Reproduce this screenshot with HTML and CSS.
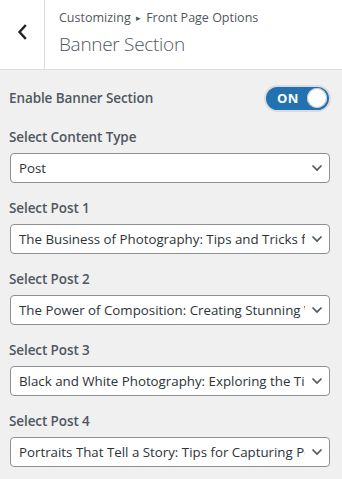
FILE: index.html
```html
<!DOCTYPE html>
<html>
<head>
<meta charset="utf-8">
<link rel="stylesheet" href="styles.css">
</head>
<body>
<div class="panel">
  <header class="head">
    <div class="back">
      <svg width="10" height="16" viewBox="0 0 10 16"><path d="M8 2 L2.5 8 L8 14" fill="none" stroke="#1d2327" stroke-width="2.4" stroke-linecap="square"/></svg>
    </div>
    <div class="titles">
      <div class="crumb">Customizing <span class="arrow">▸</span> Front Page Options</div>
      <div class="title">Banner Section</div>
    </div>
  </header>
  <main class="body">
    <div class="toggle-row">
      <span class="label">Enable Banner Section</span>
      <span class="switch"><span class="on">ON</span><span class="knob"></span></span>
    </div>
    <div class="field first">
      <span class="label">Select Content Type</span>
      <div class="select"><span class="val">Post</span><svg class="chev" width="12" height="8" viewBox="0 0 12 8"><path d="M1.5 1.5 L6 6 L10.5 1.5" fill="none" stroke="#50575e" stroke-width="1.7"/></svg></div>
    </div>
    <div class="field">
      <span class="label">Select Post 1</span>
      <div class="select"><span class="val">The Business of Photography: Tips and Tricks for Success</span><svg class="chev" width="12" height="8" viewBox="0 0 12 8"><path d="M1.5 1.5 L6 6 L10.5 1.5" fill="none" stroke="#50575e" stroke-width="1.7"/></svg></div>
    </div>
    <div class="field">
      <span class="label">Select Post 2</span>
      <div class="select"><span class="val">The Power of Composition: Creating Stunning Visuals</span><svg class="chev" width="12" height="8" viewBox="0 0 12 8"><path d="M1.5 1.5 L6 6 L10.5 1.5" fill="none" stroke="#50575e" stroke-width="1.7"/></svg></div>
    </div>
    <div class="field">
      <span class="label">Select Post 3</span>
      <div class="select"><span class="val">Black and White Photography: Exploring the Timeless Art</span><svg class="chev" width="12" height="8" viewBox="0 0 12 8"><path d="M1.5 1.5 L6 6 L10.5 1.5" fill="none" stroke="#50575e" stroke-width="1.7"/></svg></div>
    </div>
    <div class="field">
      <span class="label">Select Post 4</span>
      <div class="select"><span class="val">Portraits That Tell a Story: Tips for Capturing Personality</span><svg class="chev" width="12" height="8" viewBox="0 0 12 8"><path d="M1.5 1.5 L6 6 L10.5 1.5" fill="none" stroke="#50575e" stroke-width="1.7"/></svg></div>
    </div>
  </main>
</div>
</body>
</html>
```
FILE: styles.css
```css
* { box-sizing: border-box; }
html, body { margin: 0; padding: 0; }
body {
  width: 342px;
  height: 479px;
  background: #f0f0f1;
  font-family: "Open Sans", "Noto Sans", sans-serif;
  color: #50575e;
  overflow: hidden;
}
.head {
  display: flex;
  height: 70px;
  background: #fff;
  border-bottom: 1px solid #dcdcde;
}
.back {
  width: 45px;
  border-right: 1px solid #dcdcde;
  display: flex;
  align-items: center;
  justify-content: center;
  padding-bottom: 6px;
}
.titles {
  padding: 9px 0 0 14px;
}
.crumb {
  font-size: 12.5px;
  line-height: 18px;
  color: #50575e;
  letter-spacing: 0;
}
.arrow { font-size: 9px; position: relative; top: -1px; margin: 0 2px; }
.title {
  font-size: 19px;
  font-weight: 300;
  line-height: 28px;
  color: #50575e;
  margin-top: 2px;
  letter-spacing: -0.3px;
}
.body {
  padding: 16px 12px 0 10px;
}
.label {
  font-size: 13.5px;
  font-weight: 600;
  color: #50575e;
  letter-spacing: -0.1px;
  line-height: 20px;
  margin-left: -1px;
}
.toggle-row {
  display: flex;
  justify-content: space-between;
  align-items: center;
  height: 24px;
}
.switch {
  width: 63px;
  height: 23px;
  border-radius: 12px;
  background: #2271b1;
  box-shadow: 0 0 0 2px #dcdcde;
  display: flex;
  align-items: center;
  justify-content: space-between;
  padding: 0 2px 0 11px;
  margin-right: 1px;
}
.on {
  color: #fff;
  font-weight: 700;
  font-size: 13px;
  letter-spacing: 0.3px;
}
.knob {
  width: 20px;
  height: 20px;
  border-radius: 50%;
  background: #fff;
  box-shadow: 0 0 0 1px #c3c4c7 inset;
}
.field {
  display: flex;
  flex-direction: column;
  margin-top: 15px;
}
.field.first { margin-top: 17px; }
.select {
  margin-top: 6px;
  height: 30px;
  border: 1px solid #8c8f94;
  border-radius: 4px;
  background: #fff;
  display: flex;
  align-items: center;
  padding: 0 6px 0 8px;
}
.val {
  flex: 1;
  overflow: hidden;
  white-space: nowrap;
  font-size: 13.3px;
  color: #2c3338;
  letter-spacing: 0;
}
.chev { flex: none; margin-left: 6px; }
```
